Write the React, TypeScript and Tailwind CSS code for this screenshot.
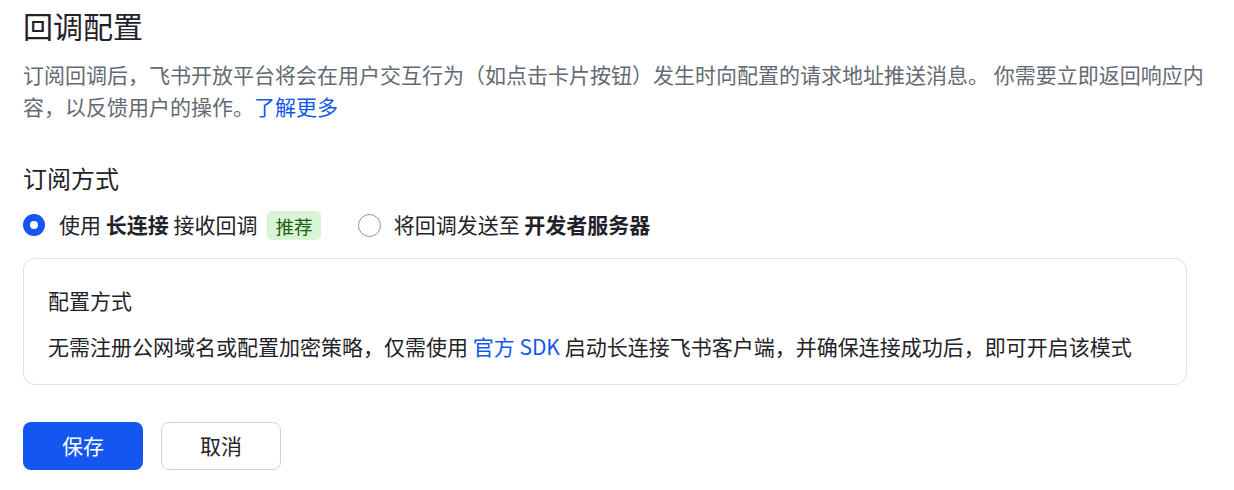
const Radio = ({ checked }: { checked: boolean }) =>
  checked ? (
    <span className="flex h-[22px] w-[22px] shrink-0 items-center justify-center rounded-full bg-[#1456f0]">
      <span className="h-[8px] w-[8px] rounded-full bg-white" />
    </span>
  ) : (
    <span className="h-[23px] w-[23px] shrink-0 rounded-full border-[1.5px] border-[#8f959e] bg-white" />
  );

const App = () => {
  return (
    <div
      className="min-h-screen bg-white pt-[5px] pl-[23px] pr-[10px] text-[#1f2329]"
      style={{ fontFamily: '"Noto Sans CJK SC", "Noto Sans", sans-serif' }}
    >
      <h1 className="text-[30px] leading-[40px] font-normal">回调配置</h1>
      <p className="mt-[13px] text-[21px] leading-[32px] text-[#646a73]">
        订阅回调后，飞书开放平台将会在用户交互行为（如点击卡片按钮）发生时向配置的请求地址推送消息。 你需要立即返回响应内容，以反馈用户的操作。
        <a className="text-[#1456f0]">了解更多</a>
      </p>

      <h2 className="mt-[40px] text-[24px] leading-[32px] font-normal">订阅方式</h2>

      <div className="mt-[15px] flex h-[32px] items-center text-[21px]">
        <label className="flex items-center">
          <Radio checked />
          <span className="ml-[14px]">
            使用 <b className="font-bold">长连接</b> 接收回调
          </span>
          <span className="ml-[10px] rounded-[5px] bg-[#d9f5d6] px-[8px] text-[18.6px] leading-[29px] text-[#186010]">
            推荐
          </span>
        </label>
        <label className="ml-[37px] flex items-center">
          <Radio checked={false} />
          <span className="ml-[13px]">
            将回调发送至 <b className="font-bold">开发者服务器</b>
          </span>
        </label>
      </div>

      <div className="mt-[17px] w-[1164px] rounded-[12px] border border-[#dee0e3] px-[24px] pt-[25px] pb-[22px] text-[21px] leading-[32px]">
        <div>配置方式</div>
        <div className="mt-[14px]">
          无需注册公网域名或配置加密策略，仅需使用 <a className="text-[#1456f0]">官方 SDK</a> 启动长连接飞书客户端，并确保连接成功后，即可开启该模式
        </div>
      </div>

      <div className="mt-[37px] flex gap-[18px]">
        <button className="h-[48px] w-[120px] rounded-[8px] bg-[#1456f0] text-[21px] text-white">
          保存
        </button>
        <button className="h-[48px] w-[120px] rounded-[8px] border border-[#d0d3d6] bg-white text-[21px] text-[#1f2329]">
          取消
        </button>
      </div>
    </div>
  );
};

export default App;
